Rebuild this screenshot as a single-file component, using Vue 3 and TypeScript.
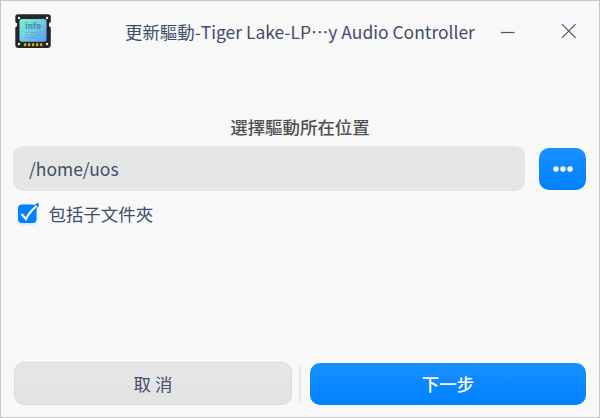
<script setup lang="ts">
import { ref } from 'vue'

const title = '更新驅動-Tiger Lake-LP…y Audio Controller'
const path = ref('/home/uos')
const includeSubfolders = ref(true)
const pins = [10.2, 14.2, 18.2, 22.2, 26.2]
</script>

<template>
  <div class="window" lang="zh-CN">
    <header class="titlebar">
      <svg class="app-icon" width="36" height="36" viewBox="0 0 36 36">
        <defs>
          <linearGradient id="screen" x1="0" y1="0" x2="1" y2="1">
            <stop offset="0" stop-color="#7df5d2" />
            <stop offset="0.5" stop-color="#74c9e8" />
            <stop offset="1" stop-color="#579bfa" />
          </linearGradient>
        </defs>
        <path
          d="M3 .2H33Q35.800 .2 35.800 3V8L34 9.500V12L35.800 13.500V31Q35.800 34 32.500 34H3.500Q.3 34 .3 31V13.500L2 12V9.500L.3 8V3Q.3 .2 3 .2Z"
          fill="#252629"
        />
        <rect x="4.500" y="5" width="27" height="22.800" rx="2.500" fill="url(#screen)" />
        <g fill="#e7edf0">
          <circle cx="4" cy="4" r="1.200" /><circle cx="32" cy="4" r="1.200" />
          <circle cx="4" cy="30" r="1.200" /><circle cx="32" cy="30" r="1.200" />
        </g>
        <text x="10" y="15" textLength="16" lengthAdjust="spacingAndGlyphs" class="icon-text">info</text>
        <g stroke="#4e9db5" stroke-width="1.200" opacity=".5">
          <path d="M10 18.500H13M15 18.500H24M10 21H13M15 21H20M22 21H26M10 23.500H14M15 23.500H23" />
        </g>
        <path v-for="pin in pins" :key="pin" :d="`M${pin} 29.300v2.800`" stroke="#f4bd24" stroke-width="2" />
      </svg>
      <h1>{{ title }}</h1>
      <button class="window-button minimize" aria-label="最小化">
        <svg width="16" height="16" viewBox="0 0 16 16"><path d="M.8 9.500H14.500" /></svg>
      </button>
      <button class="window-button close" aria-label="關閉">
        <svg width="16" height="16" viewBox="0 0 16 16"><path d="M1 1.200L14.600 14.800M14.600 1.200L1 14.800" /></svg>
      </button>
    </header>

    <main>
      <h2>選擇驅動所在位置</h2>
      <div class="path-row">
        <input v-model="path" type="text" />
        <button class="primary browse" aria-label="瀏覽">
          <svg width="20" height="6" viewBox="0 0 20 6">
            <circle cx="3" cy="3" r="2.700" /><circle cx="10" cy="3" r="2.700" /><circle cx="17" cy="3" r="2.700" />
          </svg>
        </button>
      </div>
      <label>
        <input v-model="includeSubfolders" type="checkbox" />
        <svg class="check" width="24" height="24" viewBox="0 0 24 24">
          <rect x="2" y="2.500" width="18.500" height="18.500" rx="4" fill="#0081ff" />
          <path d="M19 3L20.500 1.200H23L22.500 4L20.500 6.500Z" fill="#0081ff" />
          <path v-if="includeSubfolders" d="M5.500 12L10 17Q13 10.500 20.500 4" fill="none" stroke="#fff" stroke-width="2.200" />
        </svg>
        <span>包括子文件夾</span>
      </label>
    </main>

    <footer>
      <button class="cancel">取 消</button>
      <i class="divider"></i>
      <button class="primary next">下一步</button>
    </footer>
  </div>
</template>

<style>
body {
  margin: 0;
}
</style>

<style scoped>
.window {
  box-sizing: border-box;
  width: 600px;
  height: 418px;
  display: flex;
  flex-direction: column;
  border: 1px solid #c6c6c6;
  background: #f8f8f8;
  color: #414d68;
  font: 17.45px/26px "Noto Sans CJK SC", sans-serif;
}
button {
  border: 0;
  padding: 0;
  font: inherit;
  color: inherit;
  background: none;
}
svg {
  display: block;
}
h1,
h2 {
  margin: 0;
  font-size: inherit;
  font-weight: 400;
  white-space: nowrap;
}
.titlebar {
  display: flex;
  align-items: center;
  height: 60px;
  padding-left: 14px;
}
.app-icon {
  flex: none;
  margin-top: 2px;
}
.icon-text {
  font: 700 9px "Noto Sans", sans-serif;
  fill: #418a9b;
}
h1 {
  width: 350px;
  margin-left: 74px;
  padding-top: 2px;
}
.window-button svg {
  fill: none;
  stroke: #47536f;
  stroke-width: 1.2;
}
.minimize {
  margin-left: 25px;
}
.close {
  margin-left: 45px;
}
main {
  flex: 1;
}
h2 {
  margin-top: 53px;
  text-align: center;
  font-weight: 500;
  color: #505050;
}
.path-row {
  display: flex;
  align-items: center;
  gap: 14px;
  margin-top: 6px;
  padding-left: 12px;
}
.path-row input {
  box-sizing: border-box;
  width: 512px;
  height: 45px;
  padding: 0 16px;
  border: 0;
  border-radius: 10px;
  outline: 0;
  background: #e5e5e5;
  color: inherit;
  font: inherit;
}
.primary {
  border-radius: 10px;
  background: linear-gradient(#1890ff, #0081ff);
  color: #fff;
}
.browse {
  display: grid;
  place-items: center;
  width: 47px;
  height: 42px;
}
.browse svg {
  fill: #fff;
}
label {
  display: flex;
  align-items: center;
  margin: 10px 0 0 15px;
}
label input {
  position: absolute;
  opacity: 0;
  pointer-events: none;
}
.check {
  margin-right: 8.5px;
  filter: drop-shadow(0 1px 1px #0081ff44);
}
footer {
  display: flex;
  align-items: center;
  padding: 0 13px 12px 12px;
}
.cancel {
  box-sizing: border-box;
  width: 278px;
  height: 43px;
  margin-left: 1px;
  border: 1px solid #dadada;
  border-radius: 10px;
  background: linear-gradient(#e6e6e6, #e3e3e3);
}
.divider {
  width: 2px;
  height: 38px;
  margin: 0 9px 0 7px;
  background: #e7e7e7;
}
.next {
  width: 276px;
  height: 42px;
  font-weight: 500;
}
</style>
